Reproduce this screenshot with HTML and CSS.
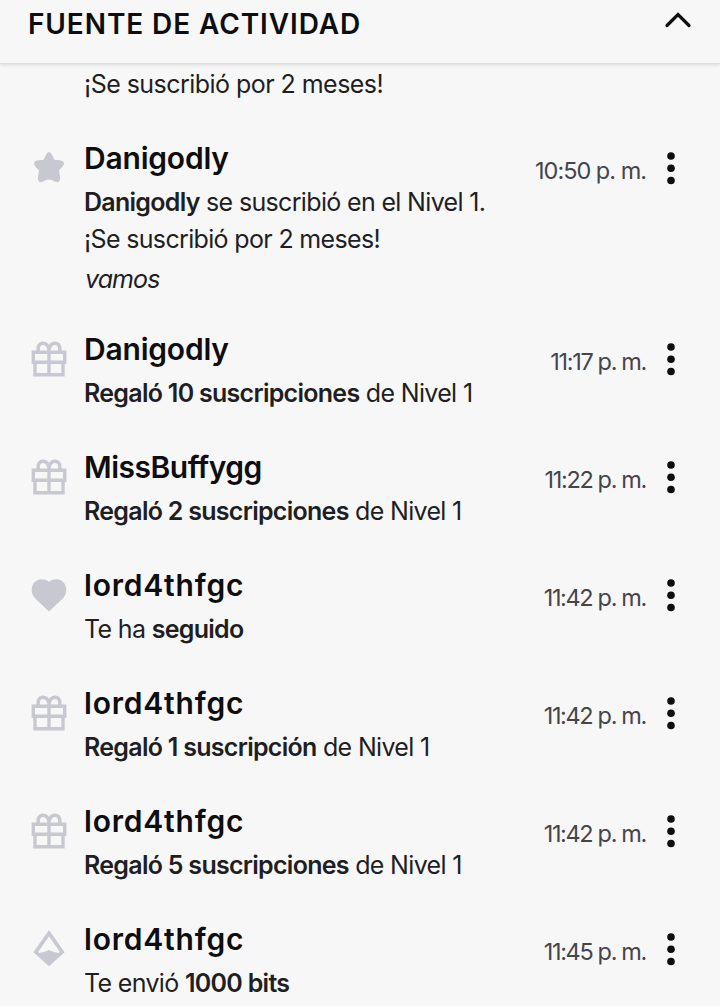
FILE: index.html
```html
<!DOCTYPE html>
<html lang="es">

<head>
    <meta charset="utf-8">
    <meta name="viewport" content="width=device-width, initial-scale=1.0">
    <title>Fuente de actividad</title>
    <link rel="stylesheet" href="styles.css">
</head>

<body>
    <svg class="sprite">
        <symbol id="star" viewBox="0 0 40 40">
            <path d="M16.8 7.2Q20 .8 23.2 7.2L25.4 11.8L32 12.4Q37.2 14.2 33.4 18.8L30 22.4L31.2 30Q31 35.4 26.2 33.8Q23 31.4 20 31.4Q17 31.4 13.8 33.8Q9 35.4 8.8 30L10 22.4L6.6 18.8Q2.8 14.2 8 12.4L14.6 11.8Z" fill="currentColor"/>
        </symbol>
        <symbol id="gift" viewBox="0 0 40 40">
            <path d="M4.3 13.3H35.7V23.3H4.3ZM6 23.3V35.7H34V23.3M20 13.3V35.7M9.2 13.3V9.5C9.2 2.4 18.3 2.4 20 10.5C21.7 2.4 30.8 2.4 30.8 9.5V13.3M20 10V13" fill="none" stroke="currentColor" stroke-width="3.4"/>
        </symbol>
        <symbol id="heart" viewBox="0 0 40 40">
            <path d="M20 36.5L6.2 23.4C-.8 16.2 3.6 4.3 12.2 4.3C15.4 4.3 18.2 5 20 7C21.8 5 24.6 4.3 27.8 4.3C36.4 4.3 40.8 16.2 33.8 23.4Z" fill="currentColor"/>
        </symbol>
        <symbol id="bits" viewBox="0 0 40 40">
            <path fill-rule="evenodd" d="M20 1L35.6 23.3L20 37.3L4.4 23.3ZM20 7.2L9.3 22.8L10.2 24Q14.5 23.6 20 21Q25.5 23.6 29.8 24L30.7 22.8Z" fill="currentColor"/>
        </symbol>
        <symbol id="dots" viewBox="0 0 12 34">
            <circle cx="6" cy="5" r="3.8"/>
            <circle cx="6" cy="17.3" r="3.8"/>
            <circle cx="6" cy="29.5" r="3.8"/>
        </symbol>
    </svg>

    <header>
        <h1>FUENTE DE ACTIVIDAD</h1>
        <svg class="arrow" viewBox="0 0 28 18"><path d="M3 14.5L14 3.5L25 14.5"/></svg>
    </header>

    <main>
        <p class="previous">¡Se suscribió por 2 meses!</p>

        <div class="event long">
            <svg class="icon"><use href="#star"/></svg>
            <div class="text">
                <h2>Danigodly</h2>
                <p><b>Danigodly</b> se suscribió en el Nivel 1.<br>¡Se suscribió por 2 meses!</p>
                <p class="note">vamos</p>
            </div>
            <time>10:50 p. m.</time>
            <svg class="more"><use href="#dots"/></svg>
        </div>

        <div class="event">
            <svg class="icon"><use href="#gift"/></svg>
            <div class="text">
                <h2>Danigodly</h2>
                <p><b>Regaló 10 suscripciones</b> de Nivel 1</p>
            </div>
            <time class="narrow">11:17 p. m.</time>
            <svg class="more"><use href="#dots"/></svg>
        </div>

        <div class="event">
            <svg class="icon"><use href="#gift"/></svg>
            <div class="text">
                <h2 class="narrow">MissBuffygg</h2>
                <p><b>Regaló 2 suscripciones</b> de Nivel 1</p>
            </div>
            <time class="narrow">11:22 p. m.</time>
            <svg class="more"><use href="#dots"/></svg>
        </div>

        <div class="event">
            <svg class="icon"><use href="#heart"/></svg>
            <div class="text">
                <h2 class="wide">lord4thfgc</h2>
                <p>Te ha <b>seguido</b></p>
            </div>
            <time class="narrow">11:42 p. m.</time>
            <svg class="more"><use href="#dots"/></svg>
        </div>

        <div class="event">
            <svg class="icon"><use href="#gift"/></svg>
            <div class="text">
                <h2 class="wide">lord4thfgc</h2>
                <p><b>Regaló 1 suscripción</b> de Nivel 1</p>
            </div>
            <time class="narrow">11:42 p. m.</time>
            <svg class="more"><use href="#dots"/></svg>
        </div>

        <div class="event">
            <svg class="icon"><use href="#gift"/></svg>
            <div class="text">
                <h2 class="wide">lord4thfgc</h2>
                <p><b>Regaló 5 suscripciones</b> de Nivel 1</p>
            </div>
            <time class="narrow">11:42 p. m.</time>
            <svg class="more"><use href="#dots"/></svg>
        </div>

        <div class="event">
            <svg class="icon"><use href="#bits"/></svg>
            <div class="text">
                <h2 class="wide">lord4thfgc</h2>
                <p>Te envió <b>1000 bits</b></p>
            </div>
            <time class="narrow">11:45 p. m.</time>
            <svg class="more"><use href="#dots"/></svg>
        </div>
    </main>
</body>

</html>
```

FILE: styles.css
```css
* {
    box-sizing: border-box;
}

body {
    background: #f7f7f7;
    color: #1f1f23;
    font-family: Inter, "Liberation Sans", sans-serif;
    height: 1006px;
    margin: 0;
    overflow: hidden;
}

h1,
h2,
p {
    margin: 0;
    white-space: nowrap;
}

.sprite {
    display: none;
}

header {
    align-items: flex-start;
    border-bottom: 1px solid #dcdcdd;
    box-shadow: 0 1px 4px rgba(0, 0, 0, .12);
    color: #0e0e10;
    display: flex;
    height: 64px;
    justify-content: space-between;
    padding: 4px 28px 0;
}

h1 {
    font-size: 28px;
    font-weight: 600;
    letter-spacing: .9px;
    line-height: 40px;
}

.arrow {
    fill: none;
    height: 18px;
    margin-top: 7px;
    stroke: #0e0e10;
    stroke-linecap: round;
    stroke-width: 3.2;
    width: 28px;
}

.previous {
    height: 74px;
    padding: 2px 0 0 84px;
}

.event {
    display: flex;
    height: 118px;
    padding: 0 43px 0 29px;
}

.event.long {
    height: 191px;
}

.icon {
    color: #c8c8d0;
    flex: none;
    height: 40px;
    margin: 10px 15px 0 0;
    width: 40px;
}

.text {
    flex: 1;
}

h2 {
    color: #0e0e10;
    font-size: 30px;
    font-weight: 600;
    letter-spacing: -.2px;
    line-height: 40px;
    margin-bottom: 5.5px;
}

h2.wide {
    letter-spacing: .8px;
}

h2.narrow {
    letter-spacing: -.5px;
}

p {
    font-size: 25px;
    letter-spacing: -.54px;
    line-height: 37.5px;
}

.event p {
    letter-spacing: -.66px;
}

.event b {
    font-weight: 600;
    letter-spacing: -.72px;
}

.event .note {
    font-style: italic;
    letter-spacing: -.9px;
    margin: 2px 0 0 1px;
}

time {
    color: #45454c;
    font-size: 23.5px;
    letter-spacing: -1px;
    line-height: 32px;
    margin-top: 17px;
    white-space: nowrap;
}

time.narrow {
    letter-spacing: -1.35px;
}

.more {
    fill: #0e0e10;
    flex: none;
    height: 34px;
    margin: 13px 0 0 19px;
    width: 12px;
}
```
